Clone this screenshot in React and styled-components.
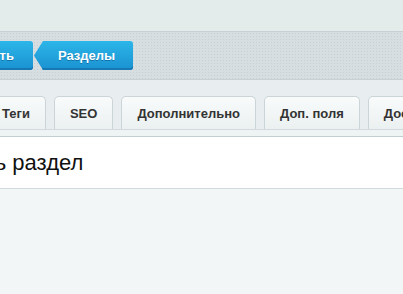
import React from "react";
import styled, { createGlobalStyle } from "styled-components";

const GlobalStyle = createGlobalStyle`
  html, body {
    margin: 0;
    padding: 0;
    background: #f3f6f7;
    font-family: "Liberation Sans", Arial, sans-serif;
  }
`;

const Page = styled.div`
  width: 403px;
  height: 294px;
  overflow: hidden;
  background: #f3f6f7;
`;

const TopArea = styled.div`
  height: 31px;
  background: #e4ebeb;
`;

const Toolbar = styled.div`
  height: 47px;
  border-top: 1px solid #c7d0d3;
  border-bottom: 1px solid #c7d0d3;
  background-color: #d6dee1;
  background-image: radial-gradient(circle, #c6cfd3 0.8px, transparent 1px);
  background-size: 3px 3px;
  display: flex;
  align-items: center;
  gap: 1px;
`;

const ToolButton = styled.button`
  height: 29px;
  border: none;
  border-radius: 3px;
  background: linear-gradient(#2cb6e8, #1a91d1);
  box-shadow: inset 0 -2px 0 #1679b4;
  color: #fff;
  font-family: inherit;
  font-weight: bold;
  font-size: 13px;
  text-shadow: 0 1px 0 rgba(0, 60, 110, 0.45);
  padding: ${({ $arrow }) => ($arrow ? "0 18px 0 24px" : "0 19px")};
  margin-left: ${({ $shift }) => $shift || "0"};
  clip-path: ${({ $arrow }) =>
    $arrow
      ? "polygon(9px 0, 100% 0, 100% 100%, 9px 100%, 0 50%)"
      : "none"};
  white-space: nowrap;
`;

const Spacer = styled.div`
  height: 15px;
  background: #e8eef0;
`;

const TabRow = styled.div`
  display: flex;
  gap: 8px;
  align-items: flex-end;
  margin-left: -14px;
  background: #e8eef0;
  height: 34px;
`;

const Tab = styled.div`
  flex: none;
  height: 33px;
  box-sizing: border-box;
  padding: 0 15px;
  border: 1px solid #cbd4d7;
  border-bottom: none;
  border-radius: 5px 5px 0 0;
  background: linear-gradient(#f9fbfb, #ebf0f1);
  color: #333;
  font-weight: bold;
  font-size: 13px;
  display: flex;
  align-items: center;
  white-space: nowrap;
`;

const Strip = styled.div`
  height: 6px;
  border-top: 1px solid #d2dadd;
  border-bottom: 1px solid #c3ced2;
  background: #eef3f4;
`;

const Content = styled.div`
  height: 51px;
  background: #fff;
  border-bottom: 1px solid #d1dadd;
  display: flex;
  align-items: center;
  margin-left: -91px;
  font-size: 22px;
  color: #111;
  white-space: nowrap;
`;

const tabs = ["Теги", "SEO", "Дополнительно", "Доп. поля", "Доступ"];

export default function App() {
  return (
    <>
      <GlobalStyle />
      <Page>
        <TopArea />
        <Toolbar>
          <ToolButton $shift="-68px">Добавить</ToolButton>
          <ToolButton $arrow>Разделы</ToolButton>
        </Toolbar>
        <Spacer />
        <TabRow>
          {tabs.map((t) => (
            <Tab key={t}>{t}</Tab>
          ))}
        </TabRow>
        <Strip />
        <Content>Добавить раздел</Content>
      </Page>
    </>
  );
}
